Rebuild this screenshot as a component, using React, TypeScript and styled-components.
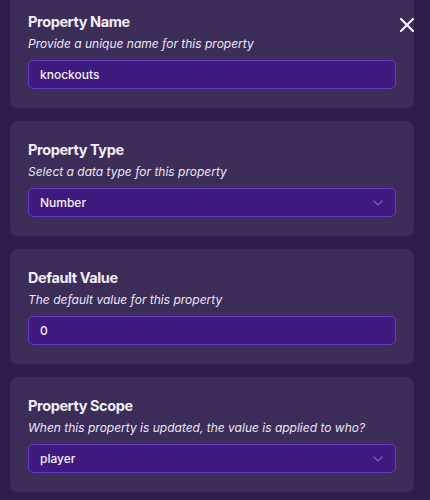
import React from "react";
import styled, { createGlobalStyle } from "styled-components";

const GlobalStyle = createGlobalStyle`
  html, body {
    margin: 0;
    padding: 0;
    background: #2d1e4c;
    font-family: Inter, "Noto Sans", sans-serif;
  }
`;

const Page = styled.div`
  position: relative;
  width: 430px;
  height: 500px;
  overflow: hidden;
  background: #2d1e4c;
`;

const List = styled.div`
  display: flex;
  flex-direction: column;
  gap: 13px;
  margin-top: -7px;
  padding: 0 16px 0 10px;
`;

const Card = styled.section`
  background: #3c2c58;
  border-radius: 8px;
  padding: 19px 18px 19px 18px;
`;

const Title = styled.h3`
  margin: 0;
  font-size: 14.5px;
  line-height: 20px;
  font-weight: 700;
  letter-spacing: -0.4px;
  color: #f2eefa;
`;

const Hint = styled.p`
  margin: 3px 0 7px;
  font-size: 12px;
  line-height: 18px;
  font-style: italic;
  color: #ebe6f5;
`;

const Field = styled.div`
  display: flex;
  align-items: center;
  justify-content: space-between;
  height: 29px;
  box-sizing: border-box;
  padding: 0 12px 0 11px;
  background: #3e1a7e;
  border: 1px solid #6a36cc;
  border-radius: 5px;
  font-size: 12px;
  font-weight: 500;
  color: #f3effb;
`;

const Close = styled.button`
  position: absolute;
  top: 16px;
  right: 14px;
  width: 18px;
  height: 18px;
  padding: 0;
  border: none;
  background: none;
  cursor: pointer;
`;

const Chevron = () => (
  <svg width="10" height="6" viewBox="0 0 10 6" fill="none">
    <path d="M1 1l4 4 4-4" stroke="#7d5fb8" strokeWidth="1.2" strokeLinecap="round" strokeLinejoin="round" />
  </svg>
);

type Item = { title: string; hint: string; value: string; select?: boolean };

const items: Item[] = [
  { title: "Property Name", hint: "Provide a unique name for this property", value: "knockouts" },
  { title: "Property Type", hint: "Select a data type for this property", value: "Number", select: true },
  { title: "Default Value", hint: "The default value for this property", value: "0" },
  { title: "Property Scope", hint: "When this property is updated, the value is applied to who?", value: "player", select: true },
];

export default function App() {
  return (
    <Page>
      <GlobalStyle />
      <List>
        {items.map((it) => (
          <Card key={it.title}>
            <Title>{it.title}</Title>
            <Hint>{it.hint}</Hint>
            <Field>
              <span>{it.value}</span>
              {it.select && <Chevron />}
            </Field>
          </Card>
        ))}
      </List>
      <Close aria-label="Close">
        <svg width="18" height="18" viewBox="0 0 18 18">
          <path d="M3 3l12 12M15 3L3 15" stroke="#f4f0fa" strokeWidth="2.2" strokeLinecap="round" />
        </svg>
      </Close>
    </Page>
  );
}
